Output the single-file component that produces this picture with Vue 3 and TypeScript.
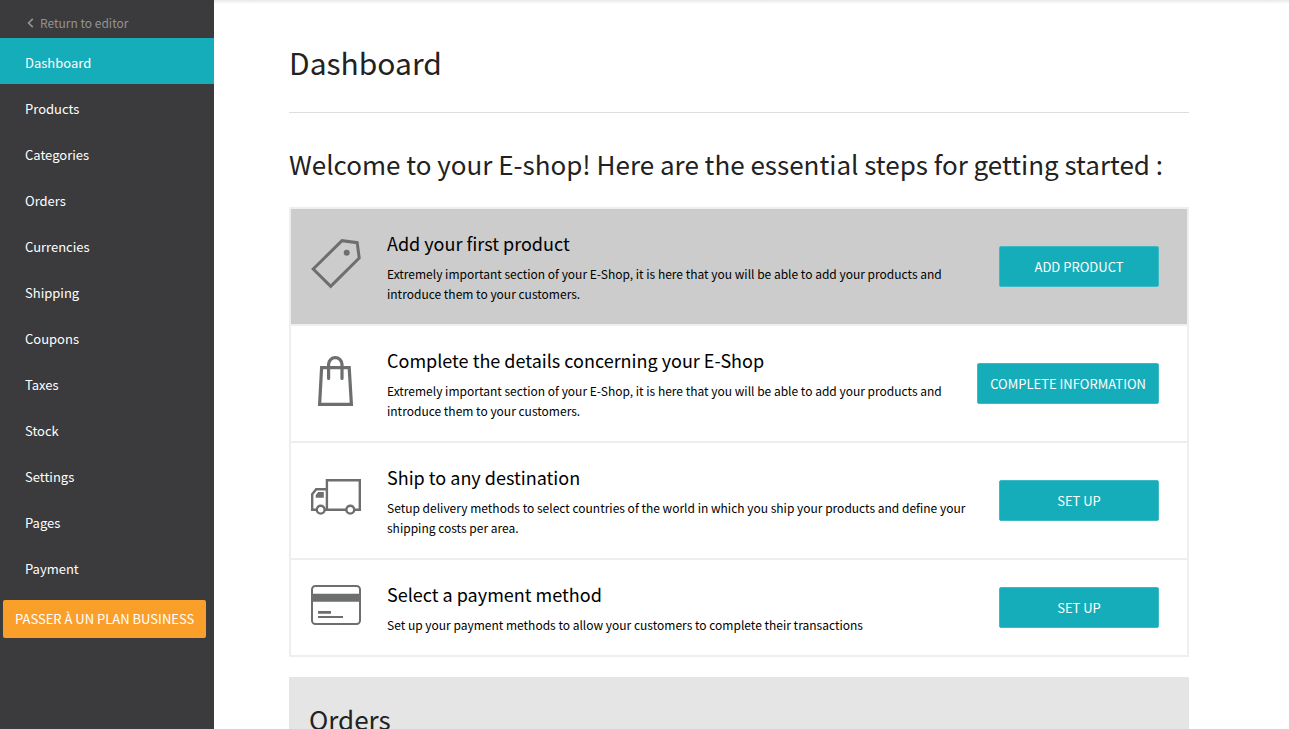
<script setup lang="ts">
interface Step {
  icon: 'tag' | 'bag' | 'truck' | 'card'
  title: string
  text: string
  action: string
}

const menu: string[] = [
  'Dashboard', 'Products', 'Categories', 'Orders', 'Currencies', 'Shipping',
  'Coupons', 'Taxes', 'Stock', 'Settings', 'Pages', 'Payment',
]

const product = 'Extremely important section of your E-Shop, it is here that you will be able to add your products and introduce them to your customers.'

const steps: Step[] = [
  { icon: 'tag', title: 'Add your first product', text: product, action: 'Add product' },
  { icon: 'bag', title: 'Complete the details concerning your E-Shop', text: product, action: 'Complete information' },
  { icon: 'truck', title: 'Ship to any destination', text: 'Setup delivery methods to select countries of the world in which you ship your products and define your shipping costs per area.', action: 'Set up' },
  { icon: 'card', title: 'Select a payment method', text: 'Set up your payment methods to allow your customers to complete their transactions', action: 'Set up' },
]
</script>

<template>
  <div class="layout">
    <nav class="sidebar">
      <a class="back" href="#">
        <svg width="7" height="10" viewBox="0 0 7 10"><path d="M5.800 .8 1.600 5l4.200 4.200" fill="none" stroke="currentColor" stroke-width="1.700" /></svg>
        Return to editor
      </a>
      <a v-for="(item, i) in menu" :key="item" href="#" class="item" :class="{ active: i === 0 }">{{ item }}</a>
      <button type="button" class="upgrade">Passer à un plan business</button>
    </nav>
    <main class="content">
      <div class="inner">
        <h1>Dashboard</h1>
        <h2>Welcome to your E-shop! Here are the essential steps for getting started :</h2>
        <section class="steps">
          <article v-for="(step, i) in steps" :key="step.title" class="step" :class="{ current: i === 0 }">
            <svg class="icon" viewBox="0 0 50 50" fill="none" stroke="#6d6e6e" aria-hidden="true">
              <g v-if="step.icon === 'tag'" stroke-width="3">
                <path d="M2.200 30 31 1.700l15.200 2L48.200 19 19.700 47.400z" />
                <circle cx="35.700" cy="13.700" r="3" fill="#6d6e6e" stroke="none" />
              </g>
              <g v-else-if="step.icon === 'bag'" stroke-width="3.200">
                <path d="M10.600 11.600h27.600l2.200 36.800H8.600z" />
                <path d="M17.600 22.500V8.300a6.700 6.700 0 0 1 13.400 0v14.200" stroke-linecap="round" />
              </g>
              <g v-else-if="step.icon === 'truck'" stroke-width="2.400">
                <path d="M15.900 7.200h32.900v29.500H15.900zM15.900 16.200H5.200l-4 5v15.500h14.700" />
                <path d="M4.700 24.800V22l2.500-3h5.600v5.800z" fill="#6d6e6e" stroke="none" />
                <circle cx="9.700" cy="36.700" r="3.900" fill="#fff" />
                <circle cx="39.300" cy="36.700" r="3.900" fill="#fff" />
              </g>
              <g v-else stroke-width="2">
                <rect x="1" y="6" width="48" height="38" rx="3.500" />
                <path d="M1 13.700h48v8H1zM7 31h13v2.700H7zM7 36h25v2H7z" fill="#6d6e6e" stroke="none" />
              </g>
            </svg>
            <div class="copy">
              <h3>{{ step.title }}</h3>
              <p>{{ step.text }}</p>
            </div>
            <button type="button" class="action">{{ step.action }}</button>
          </article>
        </section>
        <section class="orders"><h2>Orders</h2></section>
      </div>
    </main>
  </div>
</template>

<style>
body { margin: 0; overflow: hidden; }
</style>

<style scoped>
.layout {
  display: flex;
  height: 100vh;
  overflow: hidden;
  font-family: "Noto Sans CJK SC", "Open Sans", sans-serif;
  color: #222;
}
.sidebar { width: 214px; flex: none; background: #3b3b3d; }
.back { display: flex; align-items: center; gap: 6px; height: 38px; padding: 7px 0 0 27px; box-sizing: border-box; font-size: 12px; color: #939394; text-decoration: none; }
.item { display: block; padding: 4px 25px 0; line-height: 42px; font-size: 13px; color: #fff; text-decoration: none; }
.item.active { background: #15adb9; }
.upgrade { display: block; margin: 10px 0 0 3px; padding: 0 12px 2px; height: 38px; border: 0; border-radius: 2px; background: #fb9f2b; color: #fff; font: 13px "Noto Sans CJK SC", sans-serif; text-transform: uppercase; white-space: nowrap; }
.content { flex: 1; min-width: 0; background: linear-gradient(#e8e8e8, #fff 4px); }
.inner { max-width: 900px; margin: 0 100px 0 75px; }
h1 { margin: 0; padding: 38px 0 26px; line-height: 48px; font-size: 30px; font-weight: 400; border-bottom: 1px solid #ddd; }
h2 { margin: 31px 0 23px; line-height: 40px; font-size: 26px; font-weight: 400; white-space: nowrap; }
.steps { border: 2px solid #eee; color: #000; }
.step { display: flex; align-items: center; padding: 20px 28px 20px 20px; border-bottom: 2px solid #eee; }
.step:last-child { border-bottom: 0; }
.current { background: #ccc; }
.icon { width: 50px; height: 50px; flex: none; margin-bottom: 5px; }
.copy { flex: 1; margin: 0 20px 0 26px; }
h3 { margin: 0 0 7px; line-height: 28px; font-size: 18px; font-weight: 400; }
p { margin: 0; line-height: 20px; font-size: 12px; }
.action { min-width: 160px; height: 41px; padding: 0 12px; border: 1px solid #3dbac4; border-radius: 2px; background: #15adb9; color: #fff; font: 13px "Noto Sans CJK SC", sans-serif; text-transform: uppercase; white-space: nowrap; }
.orders { margin-top: 20px; padding: 22px 20px; background: #e5e5e5; }
.orders h2 { margin: 0; }
</style>
